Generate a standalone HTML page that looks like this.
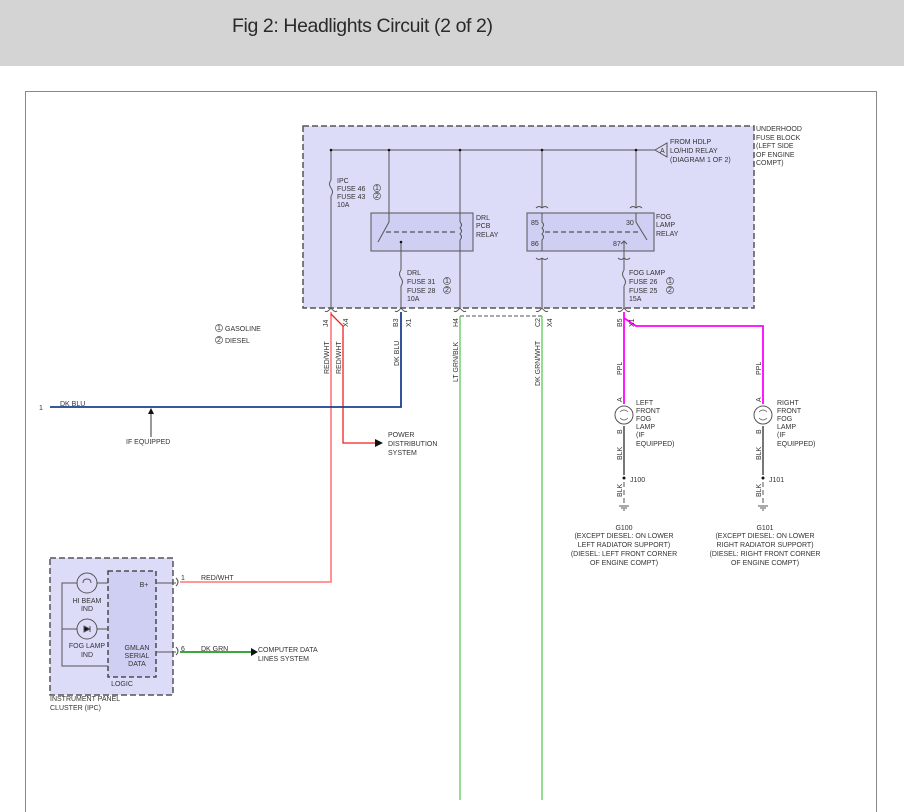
<!DOCTYPE html>
<html><head><style>
body{margin:0;width:904px;height:812px;overflow:hidden;background:#fff;font-family:"Liberation Sans",sans-serif}
.hdr{position:absolute;left:0;top:0;width:904px;height:66px;background:#d4d4d4}
.hdr span{position:absolute;left:232px;top:15px;font-size:19.5px;color:#2a2a2a;letter-spacing:-0.4px}
svg{position:absolute;left:0;top:0}
text{font-family:"Liberation Sans",sans-serif;font-size:7px;fill:#333}
</style></head><body>
<div class="hdr"><span>Fig 2: Headlights Circuit (2 of 2)</span></div>
<svg width="904" height="812" viewBox="0 0 904 812">
<rect x="25.5" y="91.5" width="851" height="730" fill="none" stroke="#888" stroke-width="1"/>
<!-- fuse block -->
<rect x="303" y="126" width="451" height="182" fill="#dcdcf8" stroke="#555" stroke-width="1.5" stroke-dasharray="6,3"/>
<rect x="371" y="213" width="102" height="38" fill="#cfcff3" stroke="#555"/>
<rect x="527" y="213" width="127" height="38" fill="#cfcff3" stroke="#555"/>
<g stroke="#555" stroke-width="1" fill="none">
<path d="M331 150H655"/>
<path d="M655 150L667 143V157Z" fill="#dcdcf8"/>
<path d="M331 150V180M331 196V308"/>
<path d="M331 180q-3 4 0 8q3 4 0 8"/>
<path d="M389 150V222L378 242"/>
<path d="M460 150V222M460 222q3 3 0 6q3 3 0 6q3 3 0 6M460 240V308"/>
<path d="M542 150V208M542 258V308"/>
<path d="M542 208q-3-3-6 0M542 208q3-3 6 0M542 258q-3 3-6 0M542 258q3 3 6 0"/>
<path d="M542 213V222q3 3 0 6q3 3 0 6q3 3 0 6V251"/>
<path d="M636 150V208M636 208q-3-3-6 0M636 208q3-3 6 0M636 213V222L647 240"/>
<path d="M624 241V258M621 244L624 241L627 244M624 258q-3 3-6 0M624 258q3 3 6 0"/>
<path d="M386 232H458M545 232H640" stroke-dasharray="5,3" stroke-width="1.3"/>
<path d="M401 242V270M401 286V308M401 270q-3 4 0 8q3 4 0 8"/>
<path d="M624 258V270M624 286V308M624 270q-3 4 0 8q3 4 0 8"/>
<path d="M460 316H542" stroke-dasharray="4,2"/>
<path d="M331 308q-4 5-6 3M331 308q4 5 6 3M401 308q-4 5-6 3M401 308q4 5 6 3M460 308q-4 5-6 3M460 308q4 5 6 3M542 308q-4 5-6 3M542 308q4 5 6 3M624 308q-4 5-6 3M624 308q4 5 6 3"/>
</g>
<g fill="#111"><circle cx="331" cy="150" r="1.3"/><circle cx="389" cy="150" r="1.3"/><circle cx="460" cy="150" r="1.3"/><circle cx="542" cy="150" r="1.3"/><circle cx="636" cy="150" r="1.3"/><circle cx="401" cy="242" r="1.3"/></g>
<g font-size="7">
<text x="337" y="183">IPC</text><text x="337" y="191">FUSE 46</text><text x="337" y="199">FUSE 43</text><text x="337" y="207">10A</text>
<text x="476" y="220">DRL</text><text x="476" y="228">PCB</text><text x="476" y="237">RELAY</text>
<text x="656" y="219">FOG</text><text x="656" y="227">LAMP</text><text x="656" y="236">RELAY</text>
<text x="531" y="225" fill="#3a5fa0">85</text><text x="531" y="246" fill="#3a5fa0">86</text><text x="626" y="225">30</text><text x="613" y="246">87</text>
<text x="407" y="275">DRL</text><text x="407" y="284">FUSE 31</text><text x="407" y="293">FUSE 28</text><text x="407" y="301">10A</text>
<text x="629" y="275">FOG LAMP</text><text x="629" y="284">FUSE 26</text><text x="629" y="293">FUSE 25</text><text x="629" y="301">15A</text>
<text x="670" y="144">FROM HDLP</text><text x="670" y="153">LO/HID RELAY</text><text x="670" y="162">(DIAGRAM 1 OF 2)</text>
<text x="660" y="153" font-size="6">A</text>
<text x="756" y="131">UNDERHOOD</text><text x="756" y="140">FUSE BLOCK</text><text x="756" y="148">(LEFT SIDE</text><text x="756" y="157">OF ENGINE</text><text x="756" y="165">COMPT)</text>
<text x="225" y="331">GASOLINE</text><text x="225" y="343">DIESEL</text>
</g>
<g fill="none" stroke="#555" stroke-width="0.7">
<circle cx="377" cy="188" r="3.5"/><circle cx="377" cy="196" r="3.5"/>
<circle cx="447" cy="281" r="3.5"/><circle cx="447" cy="290" r="3.5"/>
<circle cx="670" cy="281" r="3.5"/><circle cx="670" cy="290" r="3.5"/>
<circle cx="219" cy="328" r="3.5"/><circle cx="219" cy="340" r="3.5"/>
</g>
<g font-size="5" text-anchor="middle">
<text x="377" y="190">1</text><text x="377" y="198">2</text><text x="447" y="283">1</text><text x="447" y="292">2</text>
<text x="670" y="283">1</text><text x="670" y="292">2</text><text x="219" y="330">1</text><text x="219" y="342">2</text>
</g>
<!-- wires -->
<path d="M331 312V582H180" stroke="#f77" stroke-width="1.6" fill="none"/>
<path d="M331 314L343 326V443H375" stroke="#e22" stroke-width="1.3" fill="none"/>
<path d="M375 439L383 443L375 447Z" fill="#111"/>
<path d="M401 312V407H50" stroke="#1f3f8f" stroke-width="1.8" fill="none"/>
<path d="M151 437V411" stroke="#333" stroke-width="1"/><path d="M148 414L151 408L154 414Z" fill="#111"/>
<path d="M460 316V800M542 316V800" stroke="#6c6" stroke-width="1.4" fill="none"/>
<path d="M624 312V404M624 318L636 326H763V404" stroke="#f0f" stroke-width="1.8" fill="none"/>
<path d="M180 652H253" stroke="#292" stroke-width="1.8"/><path d="M251 648L258 652L251 656Z" fill="#111"/>
<g stroke="#555" fill="none" stroke-width="1">
<circle cx="624" cy="415" r="9"/><circle cx="763" cy="415" r="9"/>
<path d="M620 412q4-4 8 0M620 418q4 4 8 0M759 412q4-4 8 0M759 418q4 4 8 0" stroke-width="0.7"/>
<path d="M624 426V475M763 426V475" stroke-width="1.6"/>
<path d="M624 482V505M763 482V505" stroke-dasharray="5,3"/>
<path d="M619 506H629M621 508H627M623 510H625M758 506H768M760 508H766M762 510H764"/>
</g>
<circle cx="624" cy="478" r="1.5" fill="#111"/><circle cx="763" cy="478" r="1.5" fill="#111"/>
<g font-size="7">
<text x="636" y="405">LEFT</text><text x="636" y="413">FRONT</text><text x="636" y="421">FOG</text><text x="636" y="429">LAMP</text><text x="636" y="437">(IF</text><text x="636" y="446">EQUIPPED)</text>
<text x="777" y="405">RIGHT</text><text x="777" y="413">FRONT</text><text x="777" y="421">FOG</text><text x="777" y="429">LAMP</text><text x="777" y="437">(IF</text><text x="777" y="446">EQUIPPED)</text>
<text x="630" y="482">J100</text><text x="769" y="482">J101</text>
<g text-anchor="middle">
<text x="624" y="530">G100</text><text x="624" y="538">(EXCEPT DIESEL: ON LOWER</text><text x="624" y="547">LEFT RADIATOR SUPPORT)</text><text x="624" y="556">(DIESEL: LEFT FRONT CORNER</text><text x="624" y="565">OF ENGINE COMPT)</text>
<text x="765" y="530">G101</text><text x="765" y="538">(EXCEPT DIESEL: ON LOWER</text><text x="765" y="547">RIGHT RADIATOR SUPPORT)</text><text x="765" y="556">(DIESEL: RIGHT FRONT CORNER</text><text x="765" y="565">OF ENGINE COMPT)</text>
</g>
<text x="60" y="406">DK BLU</text><text x="39" y="410">1</text>
<text x="126" y="444">IF EQUIPPED</text>
<text x="388" y="437">POWER</text><text x="388" y="446">DISTRIBUTION</text><text x="388" y="455">SYSTEM</text>
<text x="201" y="580">RED/WHT</text><text x="181" y="580">1</text>
<text x="201" y="651">DK GRN</text><text x="181" y="651">6</text>
<text x="258" y="652">COMPUTER DATA</text><text x="258" y="661">LINES SYSTEM</text>
</g>
<g font-size="7">
<text transform="translate(328,327) rotate(-90)">J4</text><text transform="translate(348,327) rotate(-90)">X4</text>
<text transform="translate(398,327) rotate(-90)">B3</text><text transform="translate(411,327) rotate(-90)">X1</text>
<text transform="translate(458,327) rotate(-90)">H4</text>
<text transform="translate(540,327) rotate(-90)">C2</text><text transform="translate(552,327) rotate(-90)">X4</text>
<text transform="translate(622,327) rotate(-90)">B5</text><text transform="translate(634,327) rotate(-90)">X1</text>
<text transform="translate(329,374) rotate(-90)">RED/WHT</text><text transform="translate(341,374) rotate(-90)">RED/WHT</text>
<text transform="translate(399,366) rotate(-90)">DK BLU</text>
<text transform="translate(458,382) rotate(-90)">LT GRN/BLK</text>
<text transform="translate(540,386) rotate(-90)">DK GRN/WHT</text>
<text transform="translate(622,375) rotate(-90)">PPL</text><text transform="translate(761,375) rotate(-90)">PPL</text>
<text transform="translate(622,460) rotate(-90)">BLK</text><text transform="translate(761,460) rotate(-90)">BLK</text>
<text transform="translate(622,497) rotate(-90)">BLK</text><text transform="translate(761,497) rotate(-90)">BLK</text>
<text transform="translate(622,402) rotate(-90)" font-size="6">A</text><text transform="translate(761,402) rotate(-90)" font-size="6">A</text>
<text transform="translate(622,434) rotate(-90)" font-size="6">B</text><text transform="translate(761,434) rotate(-90)" font-size="6">B</text>
</g>
<!-- IPC -->
<rect x="50" y="558" width="123" height="137" fill="#dcdcf8" stroke="#555" stroke-width="1.5" stroke-dasharray="6,3"/>
<rect x="108" y="571" width="48" height="106" fill="#cfcff3" stroke="#333" stroke-width="1.3" stroke-dasharray="5,3"/>
<g stroke="#555" fill="none" stroke-width="1">
<path d="M108 583H97M77 583H62V666H108M62 629H77M97 629H108"/>
<circle cx="87" cy="583" r="10" fill="#dcdcf8"/><circle cx="87" cy="629" r="10" fill="#dcdcf8"/>
<path d="M83 583q0-4 4-4q4 0 4 4"/>
<path d="M84 626V632L90 629Z M90 626V632" fill="#111"/>
<path d="M156 583H176M156 652H176M176 578q4 4 0 8M176 647q4 4 0 8"/>
</g>
<g font-size="7" text-anchor="middle">
<text x="87" y="603">HI BEAM</text><text x="87" y="611">IND</text>
<text x="87" y="648">FOG LAMP</text><text x="87" y="657">IND</text>
<text x="137" y="650">GMLAN</text><text x="137" y="658">SERIAL</text><text x="137" y="666">DATA</text>
<text x="144" y="587">B+</text><text x="122" y="686">LOGIC</text>
</g>
<text x="50" y="701" fill="#7a6a40">INSTRUMENT PANEL</text><text x="50" y="710" fill="#7a6a40">CLUSTER (IPC)</text>
</svg>
</body></html>
